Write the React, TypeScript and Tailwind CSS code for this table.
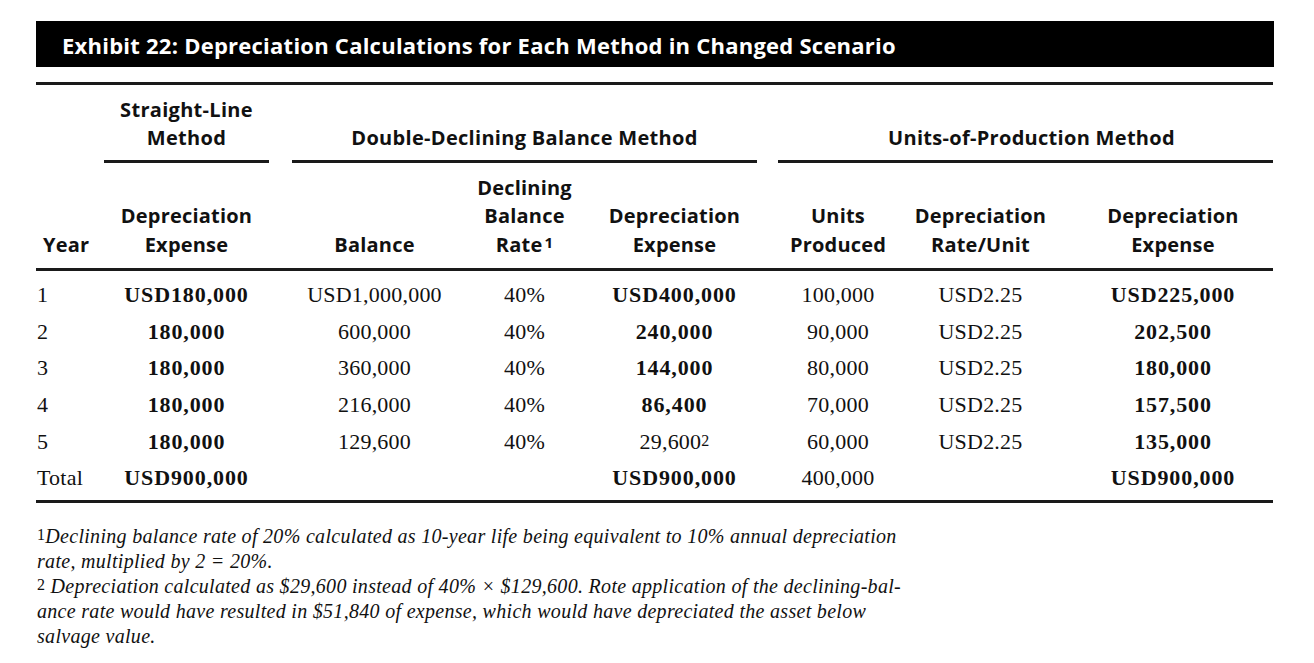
import React from "react";

const sans = { fontFamily: '"Open Sans", "Noto Sans", sans-serif' };
const serif = { fontFamily: '"Liberation Serif", "Times New Roman", serif' };

type Cell = { v: React.ReactNode; b?: boolean };

const rows: Cell[][] = [
  [{ v: "1" }, { v: "USD180,000", b: true }, { v: "USD1,000,000" }, { v: "40%" }, { v: "USD400,000", b: true }, { v: "100,000" }, { v: "USD2.25" }, { v: "USD225,000", b: true }],
  [{ v: "2" }, { v: "180,000", b: true }, { v: "600,000" }, { v: "40%" }, { v: "240,000", b: true }, { v: "90,000" }, { v: "USD2.25" }, { v: "202,500", b: true }],
  [{ v: "3" }, { v: "180,000", b: true }, { v: "360,000" }, { v: "40%" }, { v: "144,000", b: true }, { v: "80,000" }, { v: "USD2.25" }, { v: "180,000", b: true }],
  [{ v: "4" }, { v: "180,000", b: true }, { v: "216,000" }, { v: "40%" }, { v: "86,400", b: true }, { v: "70,000" }, { v: "USD2.25" }, { v: "157,500", b: true }],
  [{ v: "5" }, { v: "180,000", b: true }, { v: "129,600" }, { v: "40%" }, { v: <>29,600<span className="text-[16px] align-top relative -top-[1px]">2</span></> }, { v: "60,000" }, { v: "USD2.25" }, { v: "135,000", b: true }],
  [{ v: "Total" }, { v: "USD900,000", b: true }, { v: "" }, { v: "" }, { v: "USD900,000", b: true }, { v: "400,000" }, { v: "" }, { v: "USD900,000", b: true }],
];

const grid = "grid grid-cols-[68px_165px_23px_165px_135px_165px_21px_120px_165px_210px]";

function DataRow({ r }: { r: Cell[] }) {
  const cls = (c: Cell) => (c.b ? "font-bold tracking-[0.04em]" : "tracking-[0.01em]");
  return (
    <div className={`${grid} h-[36.6px] items-center text-[22px] leading-[28px] text-[#111]`} style={serif}>
      <div className={`pl-[1px] ${cls(r[0])}`}>{r[0].v}</div>
      <div className={`text-center ${cls(r[1])}`}>{r[1].v}</div>
      <div />
      <div className={`text-center ${cls(r[2])}`}>{r[2].v}</div>
      <div className={`text-center ${cls(r[3])}`}>{r[3].v}</div>
      <div className={`text-center ${cls(r[4])}`}>{r[4].v}</div>
      <div />
      <div className={`text-center ${cls(r[5])}`}>{r[5].v}</div>
      <div className={`text-center ${cls(r[6])}`}>{r[6].v}</div>
      <div className={`text-center pl-[10px] ${cls(r[7])}`}>{r[7].v}</div>
    </div>
  );
}

export default function App() {
  return (
    <div className="w-[1314px] h-[663px] bg-white pt-[21px] pl-[36px] text-[#111] overflow-hidden">
      <div className="w-[1238px] h-[46px] bg-black flex items-center pl-[26px] pt-[3px]">
        <span className="text-white text-[22px] font-bold tracking-[0.011em]" style={sans}>
          Exhibit 22: Depreciation Calculations for Each Method in Changed Scenario
        </span>
      </div>

      <div className="w-[1237px] mt-[15px] border-t-[3px] border-[#1a1a1a]">
        {/* group header row */}
        <div className={`${grid} h-[78px] text-[20px] font-bold leading-[28px] tracking-[0.015em]`} style={sans}>
          <div />
          <div className="border-b-[3px] border-[#1a1a1a] flex flex-col items-center justify-end pb-[8px]">
            <span>Straight-Line</span>
            <span>Method</span>
          </div>
          <div />
          <div className="col-span-3 border-b-[3px] border-[#1a1a1a] flex flex-col items-center justify-end pb-[8px]">
            <span>Double-Declining Balance Method</span>
          </div>
          <div />
          <div className="col-span-3 border-b-[3px] border-[#1a1a1a] flex flex-col items-center justify-end pb-[8px]">
            <span className="pl-[12px]">Units-of-Production Method</span>
          </div>
        </div>

        {/* column header row */}
        <div className={`${grid} h-[108px] border-b-[3px] border-[#1a1a1a] text-[20px] font-bold leading-[28.5px] tracking-[0.01em]`} style={sans}>
          <div className="flex flex-col justify-end pb-[9px] pl-[7px]">
            <span>Year</span>
          </div>
          <div className="flex flex-col items-center justify-end pb-[9px]">
            <span>Depreciation</span>
            <span>Expense</span>
          </div>
          <div />
          <div className="flex flex-col items-center justify-end pb-[9px]">
            <span>Balance</span>
          </div>
          <div className="flex flex-col items-center justify-end pb-[9px]">
            <span>Declining</span>
            <span>Balance</span>
            <span>
              Rate<span className="text-[15px] align-top relative -top-[3px] ml-[2px]">1</span>
            </span>
          </div>
          <div className="flex flex-col items-center justify-end pb-[9px]">
            <span>Depreciation</span>
            <span>Expense</span>
          </div>
          <div />
          <div className="flex flex-col items-center justify-end pb-[9px]">
            <span>Units</span>
            <span>Produced</span>
          </div>
          <div className="flex flex-col items-center justify-end pb-[9px]">
            <span>Depreciation</span>
            <span>Rate/Unit</span>
          </div>
          <div className="flex flex-col items-center justify-end pb-[9px] pl-[10px]">
            <span>Depreciation</span>
            <span>Expense</span>
          </div>
        </div>

        {/* body */}
        <div className="pt-[6px] pb-[3px] border-b-[3px] border-[#1a1a1a]">
          {rows.map((r, i) => (
            <DataRow key={i} r={r} />
          ))}
        </div>
      </div>

      <div className="mt-[21px] text-[20px] leading-[25px] italic tracking-[0.015em] text-[#111]" style={serif}>
        <div className="pl-[1px] whitespace-nowrap">
          <span className="not-italic text-[16px] align-top relative -top-[2px]">1</span>
          Declining balance rate of 20% calculated as 10-year life being equivalent to 10% annual depreciation
        </div>
        <div className="pl-[1px] whitespace-nowrap">rate, multiplied by 2 = 20%.</div>
        <div className="pl-[1px] whitespace-nowrap">
          <span className="not-italic text-[16px] align-top relative -top-[2px]">2</span> Depreciation calculated as $29,600 instead of 40% × $129,600. Rote application of the declining-bal-
        </div>
        <div className="pl-[1px] whitespace-nowrap">ance rate would have resulted in $51,840 of expense, which would have depreciated the asset below</div>
        <div className="pl-[1px] whitespace-nowrap">salvage value.</div>
      </div>
    </div>
  );
}
